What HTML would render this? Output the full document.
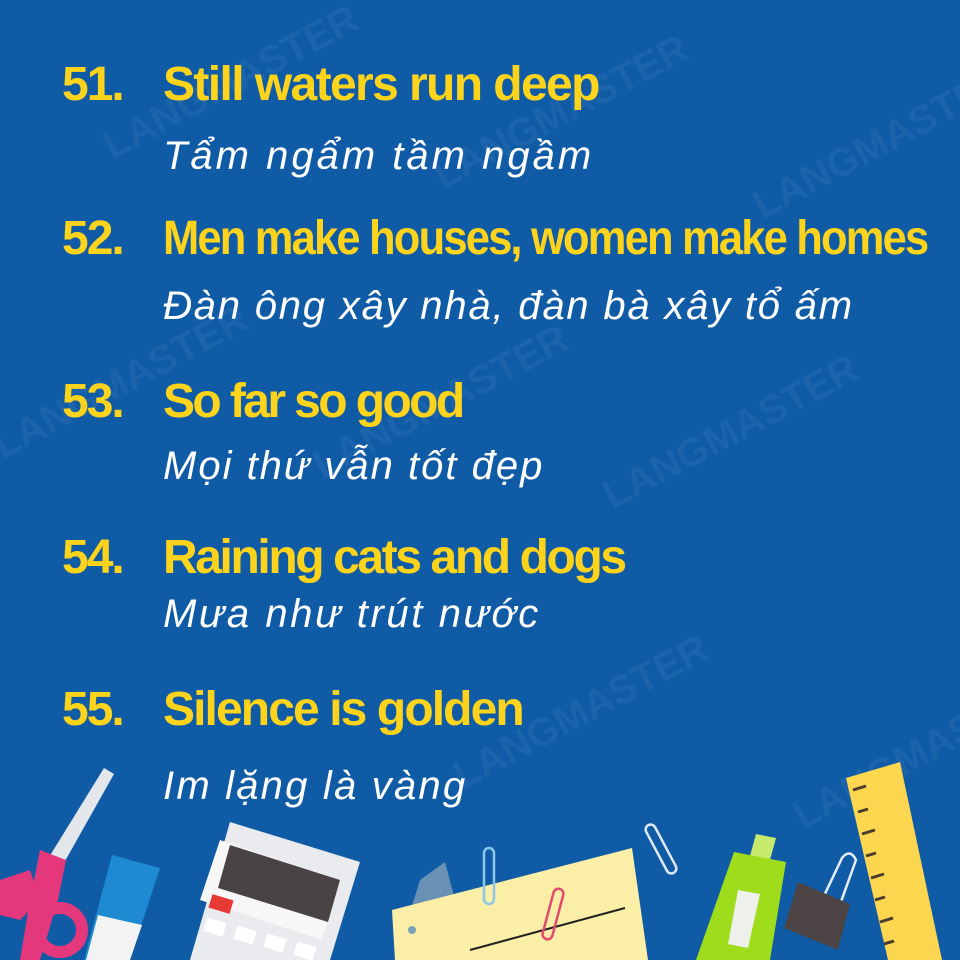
<!DOCTYPE html>
<html><head><meta charset="utf-8"><style>
html,body{margin:0;padding:0}
body{width:960px;height:960px;background:#0f5ba6;position:relative;overflow:hidden;font-family:"Liberation Sans",sans-serif}
.h{position:absolute;color:#fdd31c;font-weight:bold;font-size:48px;letter-spacing:-2px;white-space:nowrap;line-height:1}
.n{left:62px}
.t{left:163px}
.s{position:absolute;left:163px;color:#fff;font-style:italic;font-size:40px;letter-spacing:3px;white-space:nowrap;line-height:1;font-weight:normal}
.wm{position:absolute;color:rgba(255,255,255,0.05);font-weight:bold;font-size:40px;transform:rotate(-28deg);white-space:nowrap}
</style></head><body>
<div class="wm" style="left:90px;top:60px">LANGMASTER</div>
<div class="wm" style="left:420px;top:90px">LANGMASTER</div>
<div class="wm" style="left:740px;top:120px">LANGMASTER</div>
<div class="wm" style="left:-20px;top:360px">LANGMASTER</div>
<div class="wm" style="left:300px;top:380px">LANGMASTER</div>
<div class="wm" style="left:590px;top:410px">LANGMASTER</div>
<div class="wm" style="left:440px;top:690px">LANGMASTER</div>
<div class="wm" style="left:780px;top:730px">LANGMASTER</div>

<div class="h n" style="top:61px">51.</div><div class="h t" style="top:61px;letter-spacing:-1.6px">Still waters run deep</div>
<div class="s" style="top:136px">Tẩm ngẩm tầm ngầm</div>
<div class="h n" style="top:215px">52.</div><div class="h t" style="top:215px;letter-spacing:-2px;transform:scaleX(0.906);transform-origin:0 0">Men make houses, women make homes</div>
<div class="s" style="top:286px;letter-spacing:1.8px">Đàn ông xây nhà, đàn bà xây tổ ấm</div>
<div class="h n" style="top:378px">53.</div><div class="h t" style="top:378px;letter-spacing:-2.6px">So far so good</div>
<div class="s" style="top:446px;letter-spacing:2px">Mọi thứ vẫn tốt đẹp</div>
<div class="h n" style="top:534px">54.</div><div class="h t" style="top:534px;letter-spacing:-2.4px">Raining cats and dogs</div>
<div class="s" style="top:594px;letter-spacing:2.6px">Mưa như trút nước</div>
<div class="h n" style="top:686px">55.</div><div class="h t" style="top:686px;letter-spacing:-1.9px">Silence is golden</div>
<div class="s" style="top:766px;letter-spacing:2.2px">Im lặng là vàng</div>

<svg width="960" height="960" style="position:absolute;left:0;top:0">
<polygon points="104,768 114,774 60,870 46,862" fill="#e3e6ea"/>
<path d="M40,850 L66,860 L58,900 L40,960 L20,960 L30,900Z" fill="#e5377c"/>
<path d="M0,880 L30,870 L40,900 L20,920 L0,915Z" fill="#e5377c"/>
<circle cx="60" cy="930" r="22" fill="none" stroke="#e5377c" stroke-width="12"/>
<polygon points="112,855 160,868 130,960 84,960" fill="#1e8ad1"/>
<polygon points="98,915 142,925 130,960 86,960" fill="#f3f3f3"/>
<polygon points="230,822 360,862 330,960 190,960" fill="#e9ebee"/>
<polygon points="220,840 340,880 322,940 200,900" fill="#f7f7f7"/>
<polygon points="230,845 340,880 328,922 218,888" fill="#4a4343"/>
<rect x="210" y="897" width="22" height="14" fill="#e83a35" transform="rotate(17 221 904)"/>
<g fill="#fff"><rect x="205" y="920" width="20" height="14" transform="rotate(17 215 927)"/><rect x="235" y="928" width="20" height="14" transform="rotate(17 245 935)"/><rect x="265" y="936" width="20" height="14" transform="rotate(17 275 943)"/><rect x="295" y="944" width="20" height="14" transform="rotate(17 305 951)"/></g>
<polygon points="420,880 445,862 455,900 430,960 395,960" fill="#7f9fb8" opacity="0.8"/>
<polygon points="392,910 632,848 648,960 395,960" fill="#fbefa8"/>
<line x1="470" y1="950" x2="625" y2="908" stroke="#222" stroke-width="2"/>
<circle cx="412" cy="930" r="4" fill="#7e9fba"/>
<rect x="484" y="848" width="10" height="56" rx="5" fill="none" stroke="#8bc8e8" stroke-width="2.5"/>
<rect x="548" y="888" width="10" height="52" rx="5" fill="none" stroke="#e34a6f" stroke-width="2.5" transform="rotate(15 553 914)"/>
<rect x="656" y="822" width="10" height="54" rx="5" fill="none" stroke="#dfe8f2" stroke-width="2.5" transform="rotate(-28 661 849)"/>
<polygon points="756,834 776,838 770,860 750,856" fill="#c6eb6c"/>
<polygon points="734,852 786,862 770,960 696,960" fill="#9fdc1c"/>
<polygon points="738,890 760,894 748,948 728,944" fill="#eef0ec"/>
<path d="M822,900 L842,858 Q850,848 856,860 L838,910" fill="none" stroke="#e4eef7" stroke-width="2.5"/>
<polygon points="798,882 850,904 838,950 784,928" fill="#4c4444"/>
<polygon points="846,778 900,762 942,960 888,960" fill="#fdd64f"/>
<g stroke="#4a3b2e" stroke-width="3"><line x1="853" y1="790" x2="866" y2="786"/><line x1="858" y1="812" x2="868" y2="809"/><line x1="862" y1="834" x2="875" y2="830"/><line x1="866" y1="856" x2="876" y2="853"/><line x1="871" y1="878" x2="884" y2="874"/><line x1="875" y1="900" x2="885" y2="897"/><line x1="880" y1="922" x2="893" y2="918"/><line x1="884" y1="944" x2="894" y2="941"/></g>
</svg>
</body></html>
